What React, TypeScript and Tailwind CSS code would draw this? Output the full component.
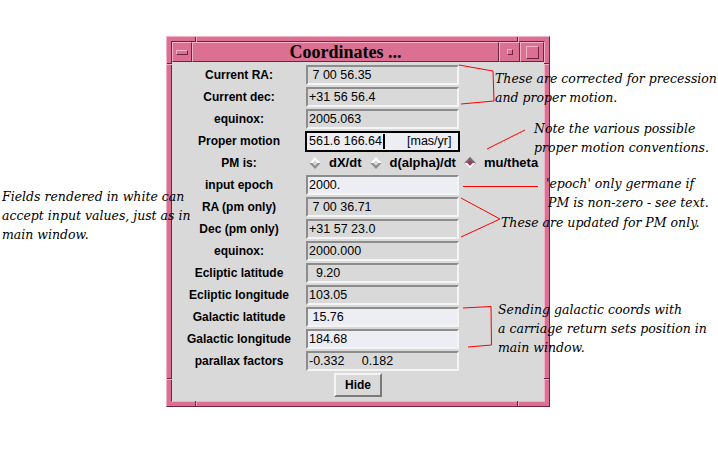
import React from 'react';

type Row = { label: string; value: string; white?: boolean };

const topRows: Row[] = [
  { label: 'Current RA:', value: ' 7 00 56.35' },
  { label: 'Current dec:', value: '+31 56 56.4' },
  { label: 'equinox:', value: '2005.063' },
];

const bottomRows: Row[] = [
  { label: 'input epoch', value: '2000.', white: true },
  { label: 'RA (pm only)', value: ' 7 00 36.71' },
  { label: 'Dec (pm only)', value: '+31 57 23.0' },
  { label: 'equinox:', value: '2000.000' },
  { label: 'Ecliptic latitude', value: '  9.20' },
  { label: 'Ecliptic longitude', value: '103.05' },
  { label: 'Galactic latitude', value: ' 15.76', white: true },
  { label: 'Galactic longitude', value: '184.68', white: true },
  { label: 'parallax factors', value: '-0.332     0.182' },
];

function Label({ children }: { children: React.ReactNode }) {
  return <div className="w-[134px] text-center text-[12px] font-bold leading-[14px]">{children}</div>;
}

function Field({ value, white }: { value: string; white?: boolean }) {
  return (
    <div
      className={`h-[20px] w-[153px] whitespace-pre border-2 border-t-[#8c8c8c] border-l-[#8c8c8c] border-b-[#f4f4f4] border-r-[#f4f4f4] pl-[1px] text-[12.5px] leading-[16px] ${
        white ? 'bg-[#ededf4]' : 'bg-[#d9d9d9]'
      }`}
    >
      {value}
    </div>
  );
}

function FieldRow({ row }: { row: Row }) {
  return (
    <div className="flex h-[22px] items-center">
      <Label>{row.label}</Label>
      <Field value={row.value} white={row.white} />
    </div>
  );
}

function Diamond({ on }: { on?: boolean }) {
  return (
    <span
      className={`inline-block h-[8px] w-[8px] rotate-45 border-2 ${
        on
          ? 'border-t-[#6e6e6e] border-l-[#6e6e6e] border-b-white border-r-white bg-[#b03060]'
          : 'border-t-white border-l-white border-b-[#8c8c8c] border-r-[#8c8c8c] bg-[#d9d9d9]'
      }`}
    />
  );
}

function Radio({ label, on, gap }: { label: string; on?: boolean; gap: string }) {
  return (
    <div className={`flex items-center ${gap}`}>
      <Diamond on={on} />
      <span className="ml-[10px] text-[13px] font-bold">{label}</span>
    </div>
  );
}

function TitleButton({ children, className }: { children?: React.ReactNode; className: string }) {
  return (
    <div
      className={`flex h-[20px] items-center justify-center border border-t-[#f2b2c8] border-l-[#f2b2c8] border-b-[#6d2442] border-r-[#6d2442] bg-[#db7093] ${className}`}
    >
      {children}
    </div>
  );
}

function Notch({ className }: { className: string }) {
  return <div className={`absolute ${className}`} />;
}

export default function App() {
  return (
    <div
      className="relative h-[449px] w-[718px] overflow-hidden bg-white text-black"
      style={{ fontFamily: '"Liberation Sans", Arial, sans-serif' }}
    >
      {/* window */}
      <div className="absolute left-[166px] top-[36px] h-[371px] w-[384px] border border-t-[#f2b2c8] border-l-[#f2b2c8] border-b-[#6d2442] border-r-[#6d2442] bg-[#db7093] p-[4px]">
        <Notch className="left-[28px] top-0 h-[5px] w-[2px] border-l border-l-[#6d2442] border-r border-r-[#f2b2c8]" />
        <Notch className="left-[350px] top-0 h-[5px] w-[2px] border-l border-l-[#6d2442] border-r border-r-[#f2b2c8]" />
        <Notch className="left-0 top-[26px] h-[2px] w-[5px] border-t border-t-[#6d2442] border-b border-b-[#f2b2c8]" />
        <Notch className="right-0 top-[26px] h-[2px] w-[5px] border-t border-t-[#6d2442] border-b border-b-[#f2b2c8]" />
        <Notch className="left-0 bottom-[26px] h-[2px] w-[5px] border-t border-t-[#6d2442] border-b border-b-[#f2b2c8]" />
        <Notch className="right-0 bottom-[26px] h-[2px] w-[5px] border-t border-t-[#6d2442] border-b border-b-[#f2b2c8]" />
        <Notch className="left-[28px] bottom-0 h-[5px] w-[2px] border-l border-l-[#6d2442] border-r border-r-[#f2b2c8]" />
        <Notch className="left-[350px] bottom-0 h-[5px] w-[2px] border-l border-l-[#6d2442] border-r border-r-[#f2b2c8]" />

        <div className="flex h-full flex-col border border-t-[#6d2442] border-l-[#6d2442] border-b-[#f2b2c8] border-r-[#f2b2c8]">
          {/* title bar */}
          <div className="flex h-[20px]">
            <TitleButton className="w-[20px]">
              <span className="h-[5px] w-[12px] border border-t-[#f2b2c8] border-l-[#f2b2c8] border-b-[#6d2442] border-r-[#6d2442]" />
            </TitleButton>
            <TitleButton className="flex-1">
              <span
                className="text-[18px] font-bold leading-[18px]"
                style={{ fontFamily: '"Liberation Serif", "Times New Roman", serif' }}
              >
                Coordinates ...
              </span>
            </TitleButton>
            <TitleButton className="w-[21px]">
              <span className="h-[6px] w-[6px] border border-t-[#f2b2c8] border-l-[#f2b2c8] border-b-[#6d2442] border-r-[#6d2442]" />
            </TitleButton>
            <TitleButton className="w-[24px]">
              <span className="h-[13px] w-[13px] border border-t-[#f2b2c8] border-l-[#f2b2c8] border-b-[#6d2442] border-r-[#6d2442]" />
            </TitleButton>
          </div>

          {/* content */}
          <div className="flex flex-1 flex-col bg-[#d9d9d9] pt-[2px]">
            {topRows.map((r, i) => (
              <FieldRow key={i} row={r} />
            ))}
            <div className="flex h-[22px] items-center">
              <Label>Proper motion</Label>
              <div className="flex h-[21px] w-[155px] -ml-[1px] items-center border-2 border-black bg-[#ededf4] pl-[2px] text-[12.5px] leading-[16px]">
                <span>561.6 166.64</span>
                <span className="ml-[1px] h-[15px] w-[2px] bg-black" />
                <span className="ml-[22px]">[mas/yr]</span>
              </div>
            </div>
            <div className="flex h-[22px] items-center">
              <Label>PM is:</Label>
              <div className="flex items-center pl-[5px]">
                <Radio label="dX/dt" gap="" />
                <Radio label="d(alpha)/dt" gap="ml-[10px]" />
                <Radio label="mu/theta" on gap="ml-[10px]" />
              </div>
            </div>
            {bottomRows.map((r, i) => (
              <FieldRow key={i} row={r} />
            ))}
            <div className="mt-[1px] flex justify-center">
              <button className="h-[24px] w-[48px] border-2 border-t-[#f4f4f4] border-l-[#f4f4f4] border-b-[#7a7a7a] border-r-[#7a7a7a] bg-[#d9d9d9] text-[12px] font-bold">
                Hide
              </button>
            </div>
          </div>
        </div>
      </div>

      {/* annotation lines */}
      <svg className="pointer-events-none absolute left-0 top-0" width="718" height="449">
        <g fill="none" stroke="#ff0000" strokeWidth="1">
          <polyline points="459,65 493,71 494,101 461,104" />
          <line x1="487" y1="149" x2="525" y2="130" />
          <line x1="463" y1="186.5" x2="538" y2="186.5" />
          <polyline points="461,198 500,219 461,237" />
          <polyline points="463,308 491,306.5 491.5,345 468,347" />
        </g>
      </svg>

      {/* annotation text */}
      <div
        className="absolute inset-0 text-[12.5px] italic leading-[19px]"
        style={{ fontFamily: '"DejaVu Serif", "Liberation Serif", serif' }}
      >
        <div className="absolute left-[495px] top-[69px]">
          These are corrected for precession
          <br />
          and proper motion.
        </div>
        <div className="absolute left-[534px] top-[119px]">
          Note the various possible
          <br />
          proper motion conventions.
        </div>
        <div className="absolute left-[546px] top-[174px]">
          'epoch' only germane if
          <br />
          <span className="ml-[2px]">PM is non-zero - see text.</span>
        </div>
        <div className="absolute left-[501px] top-[213px]">These are updated for PM only.</div>
        <div className="absolute left-[498px] top-[300px]">
          Sending galactic coords with
          <br />
          a carriage return sets position in
          <br />
          main window.
        </div>
        <div className="absolute left-[2px] top-[187px]">
          Fields rendered in white can
          <br />
          accept input values, just as in
          <br />
          main window.
        </div>
      </div>
    </div>
  );
}
